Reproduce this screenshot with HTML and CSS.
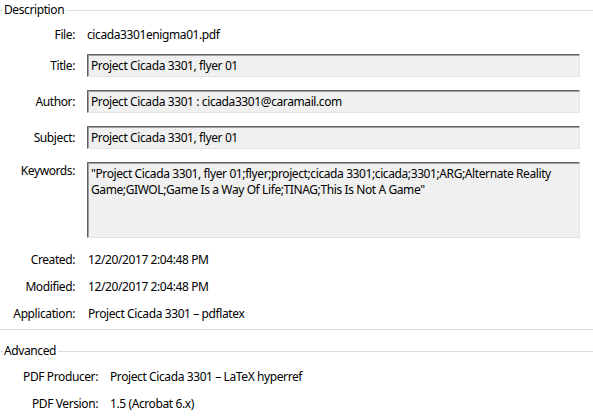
FILE: index.html
```html
<!DOCTYPE html>
<html>
<head>
<meta charset="utf-8">
<link rel="stylesheet" href="styles.css">
</head>
<body>
<div class="panel">
  <div class="group-head"><span class="group-title">Description</span></div>
  <div class="desc">
    <div class="row plain file-row"><span class="label">File:</span><span class="value filename">cicada3301enigma01.pdf</span></div>
    <div class="row box-row"><span class="label">Title:</span><div class="field">Project Cicada 3301, flyer 01</div></div>
    <div class="row box-row"><span class="label">Author:</span><div class="field">Project Cicada 3301 : cicada3301@caramail.com</div></div>
    <div class="row box-row"><span class="label">Subject:</span><div class="field">Project Cicada 3301, flyer 01</div></div>
    <div class="row box-row top"><span class="label">Keywords:</span><div class="field area">"Project Cicada 3301, flyer 01;flyer;project;cicada 3301;cicada;3301;ARG;Alternate Reality<br>Game;GIWOL;Game Is a Way Of Life;TINAG;This Is Not A Game"</div></div>
    <div class="row plain created"><span class="label">Created:</span><span class="value">12/20/2017 2:04:48 PM</span></div>
    <div class="row plain"><span class="label">Modified:</span><span class="value">12/20/2017 2:04:48 PM</span></div>
    <div class="row plain"><span class="label">Application:</span><span class="value">Project Cicada 3301 – pdflatex</span></div>
  </div>
  <div class="separator"></div>
  <div class="group-head adv"><span class="group-title">Advanced</span></div>
  <div class="advanced">
    <div class="row plain"><span class="label">PDF Producer:</span><span class="value">Project Cicada 3301 – LaTeX hyperref</span></div>
    <div class="row plain"><span class="label">PDF Version:</span><span class="value">1.5 (Acrobat 6.x)</span></div>
  </div>
</div>
</body>
</html>
```
FILE: styles.css
```css
html, body {
  margin: 0;
  padding: 0;
  background: #ffffff;
}
body {
  font-family: "Noto Sans", "Liberation Sans", sans-serif;
  font-size: 12px;
  letter-spacing: -0.4px;
  color: #000000;
  width: 593px;
  height: 419px;
  overflow: hidden;
}
.panel {
  display: flex;
  flex-direction: column;
}
.group-head {
  display: flex;
  align-items: center;
  height: 20px;
}
.group-head::before {
  content: "";
  width: 3px;
  height: 1px;
  background: #d5dfe5;
  margin-right: 1px;
}
.group-head::after {
  content: "";
  flex: 1;
  height: 1px;
  background: #d5dfe5;
  margin-left: 2px;
}
.group-title {
  line-height: 20px;
}
.desc {
  display: flex;
  flex-direction: column;
  padding-top: 5px;
}
.row {
  display: flex;
  align-items: center;
}
.row.top {
  align-items: flex-start;
}
.label {
  flex: 0 0 75px;
  text-align: right;
  line-height: 20px;
}
.desc .value {
  margin-left: 13px;
  line-height: 20px;
}
.desc .value.filename {
  margin-left: 12px;
}
.plain {
  height: 20px;
}
.file-row {
  margin-bottom: 9px;
}
.box-row {
  margin-bottom: 13px;
}
.box-row .label {
  margin-right: 12px;
}
.field {
  width: 493px;
  height: 23px;
  box-sizing: border-box;
  background: #f0f0f0;
  border-top: 1px solid #646464;
  border-left: 1px solid #646464;
  border-right: 1px solid #e3e3e3;
  border-bottom: 1px solid #e3e3e3;
  box-shadow: inset 1px 1px 0 #a0a0a0;
  padding: 1px 3px 0 3px;
  line-height: 20px;
  white-space: nowrap;
}
.field.area {
  height: 76px;
  line-height: 16px;
  padding-top: 3px;
}
.row.top .label {
  line-height: 18px;
}
.created {
  margin-top: -1px;
}
.desc .plain + .plain {
  margin-top: 7px;
}
.separator {
  height: 1px;
  background: #d5dfe5;
  margin-top: 5px;
}
.group-head.adv {
  margin-top: 11px;
}
.advanced {
  display: flex;
  flex-direction: column;
  padding-top: 6px;
}
.advanced .label {
  flex: 0 0 98px;
}
.advanced .value {
  margin-left: 12px;
  line-height: 20px;
}
.advanced .plain + .plain {
  margin-top: 7px;
}
```
